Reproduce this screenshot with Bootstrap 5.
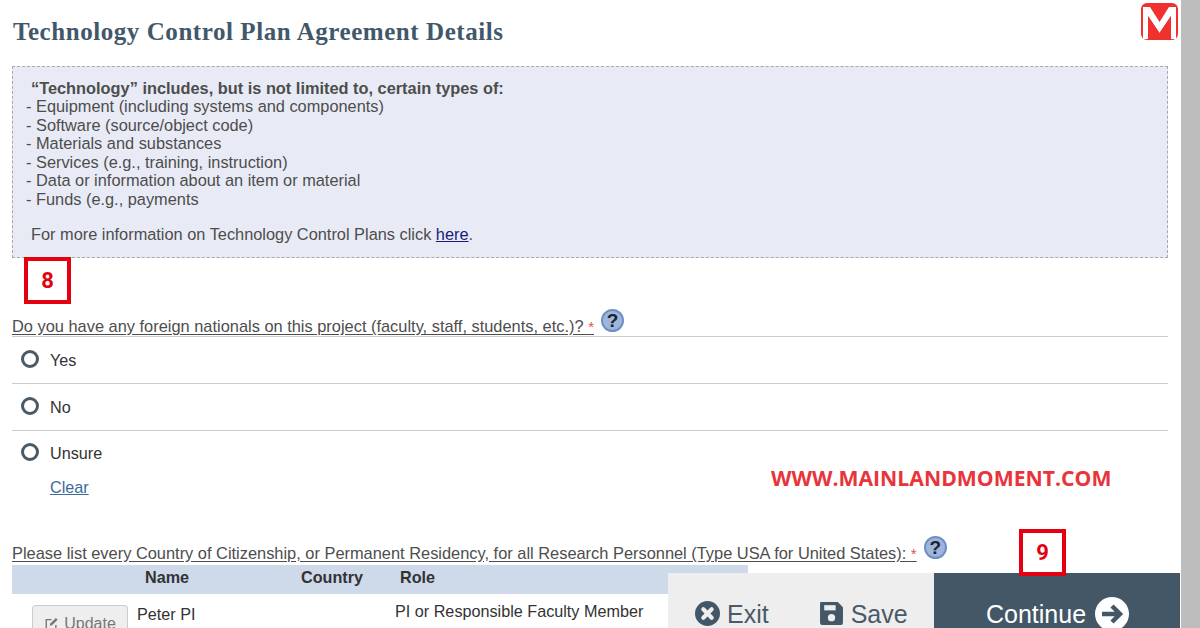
<!DOCTYPE html>
<html lang="en">

<head>
    <meta charset="UTF-8">
    <title>Technology Control Plan Agreement Details</title>
    <link href="https://cdn.jsdelivr.net/npm/bootstrap@5.3.3/dist/css/bootstrap.min.css" rel="stylesheet">
    <style>
        html, body { height: 100%; overflow: hidden; }
        body { font-family: "Liberation Sans", Arial, sans-serif; font-size: 16.2px; color: #444; background: #fff; }
        .page-wrap { height: 628px; }
        .page-main { width: 1181px; height: 628px; overflow: hidden; padding: 0 13px 0 12px; }
        .fake-scroll { width: 19px; background: #bdbdbd; }
        .page-title { font-family: "Liberation Serif", "Times New Roman", serif; font-weight: 700; font-size: 25px; letter-spacing: .56px; color: #42586a; line-height: 30px; margin: 17px 0 19px 1px; }
        .logo-m { position: absolute; left: 1141px; top: 3px; width: 37px; height: 37px; }
        .info-box { height: 192px; background: #e8ebf6; border: 1px dashed #a9a9a9; padding: 12px 13px; line-height: 18.45px; font-size: 16.35px; color: #4d4d4d; }
        .info-box p { margin: 0; }
        .info-head { font-weight: 700; padding-left: 5px; }
        .info-more { padding-left: 5px; margin-top: 17px !important; }
        .info-box a { color: #1a1a7a; }
        .tag-box { position: absolute; width: 47px; height: 47px; border: 4px solid #e5000f; background: #fff; color: #e5000f; font-family: Roboto, "Liberation Sans", sans-serif; font-weight: 700; font-size: 22px; }
        .tag-8 { left: 24px; top: 257px; }
        .tag-9 { left: 1019px; top: 529px; }
        .quest { font-size: 16.4px; line-height: 18px; color: #4d4d4d; }
        .quest-text { text-decoration: underline; text-underline-offset: 2px; }
        .req { color: #d9534f; font-size: 15px; }
        .help-dot { width: 23px; height: 23px; border-radius: 50%; background: #9fb6dc; border: 2px solid #6f8fc4; color: #1c2230; font-weight: 700; font-size: 19px; line-height: 1; margin-left: 7px; position: relative; top: -6px; }
        .quest-one { margin-top: 57px; }
        .radio-list { border-top: 1px solid #ccc; margin-top: -2px; }
        .radio-row { height: 47px; padding: 0 0 0 9px; border-bottom: 1px solid #ccc; background: transparent; color: #333; font-size: 16.2px; }
        .radio-row.last-row { border-bottom: 0; height: auto; padding-top: 10px; }
        .radio-dot { width: 18px; height: 18px; border: 3px solid #4a5a66; border-radius: 50%; flex: none; margin-right: 11px; position: relative; top: -1px; }
        .clear-link { color: #3b6a99; margin: 13px 0 0 38px; display: inline-block; line-height: 18px; }
        .quest-two { margin-top: 42px; }
        .people-table { width: 736px; margin: 0; table-layout: fixed; border-collapse: collapse; }
        .people-table th { background: #ced9ea; height: 29px; padding: 0 0 3px; font-size: 16.2px; color: #333; border: 0; vertical-align: middle; }
        .people-table td { padding: 11px 0 0; font-size: 16.2px; color: #333; border: 0; vertical-align: top; line-height: 18px; }
        .col-btn { width: 125px; }
        .col-name { width: 164px; }
        .col-country { width: 94px; }
        .people-table th.col-name { padding-left: 8px; }
        .people-table th.col-role { padding-left: 5px; }
        .people-table td.cell-role { padding-top: 8px; }
        /* button is cut by the window bottom, so it stops at the edge with no lower border */
        .btn-update { display: block; width: 96px; height: 23px; margin: 0 0 0 20px; padding: 11px 0 0; border: 1px solid #ccc; border-bottom: 0; border-radius: 4px 4px 0 0; background: #eee; color: #777; font-size: 16px; line-height: 12px; white-space: nowrap; }
        .btn-update svg { margin-right: 5px; vertical-align: -2px; }
        .action-bar { position: absolute; left: 668px; top: 573px; width: 512px; height: 55px; background: #eee; font-size: 25px; line-height: 30px; overflow: hidden; }
        .bar-left { width: 266px; height: 55px; padding: 26px 0 0 27px; color: #4a5a68; gap: 50px; }
        .bar-item svg { width: 25px; height: 25px; margin-right: 7px; }
        .bar-go { width: 246px; height: 55px; background: #435767; color: #fff; padding: 26px 0 0 52px; }
        .bar-go svg { width: 34px; height: 34px; margin-left: 9px; flex: none; }
        .site-url { position: absolute; left: 771px; top: 465px; font-family: "Open Sans", "Liberation Sans", sans-serif; font-weight: 700; font-size: 21.200px; line-height: 26px; color: #e8343a; white-space: nowrap; }
    </style>
</head>

<body>
    <div class="page-wrap d-flex position-relative">
        <div class="page-main">
            <h1 class="page-title">Technology Control Plan Agreement Details</h1>

            <!-- Info box -->
            <div class="info-box">
                <p class="info-head">“Technology” includes, but is not limited to, certain types of:</p>
                <p>- Equipment (including systems and components)</p>
                <p>- Software (source/object code)</p>
                <p>- Materials and substances</p>
                <p>- Services (e.g., training, instruction)</p>
                <p>- Data or information about an item or material</p>
                <p>- Funds (e.g., payments</p>
                <p class="info-more">For more information on Technology Control Plans click <a href="#">here</a>.</p>
            </div>

            <!-- First question -->
            <div class="quest quest-one d-flex align-items-center">
                <span class="quest-text">Do you have any foreign nationals on this project (faculty, staff, students, etc.)? <span class="req">*</span></span>
                <span class="help-dot d-flex align-items-center justify-content-center">?</span>
            </div>
            <div class="radio-list list-group list-group-flush">
                <div class="radio-row list-group-item d-flex align-items-center"><span class="radio-dot"></span>Yes</div>
                <div class="radio-row list-group-item d-flex align-items-center"><span class="radio-dot"></span>No</div>
                <div class="radio-row last-row list-group-item d-flex align-items-center"><span class="radio-dot"></span>Unsure</div>
            </div>
            <a href="#" class="clear-link">Clear</a>

            <!-- Second question -->
            <div class="quest quest-two d-flex align-items-center">
                <span class="quest-text">Please list every Country of Citizenship, or Permanent Residency, for all Research Personnel (Type USA for United States): <span class="req">*</span></span>
                <span class="help-dot d-flex align-items-center justify-content-center">?</span>
            </div>
            <table class="table people-table">
                <thead>
                    <tr>
                        <th class="col-btn"></th>
                        <th class="col-name">Name</th>
                        <th class="col-country">Country</th>
                        <th class="col-role">Role</th>
                    </tr>
                </thead>
                <tbody>
                    <tr>
                        <td><button class="btn btn-update" type="button"><svg width="15" height="14" viewBox="0 0 16 16" fill="none" stroke="#777" stroke-width="1.6"><path d="M13 9v5H2V3h6"/><path d="M6 10l.6-2.600L13 1l2 2-6.400 6.400z" fill="#777" stroke="none"/></svg>Update</button></td>
                        <td>Peter PI</td>
                        <td></td>
                        <td class="cell-role">PI or Responsible Faculty Member</td>
                    </tr>
                </tbody>
            </table>
        </div>
        <div class="fake-scroll"></div>

        <!-- Logo -->
        <svg class="logo-m" viewBox="0 0 37 37">
            <rect width="37" height="37" rx="6" fill="#f1312e"/>
            <path d="M2 36V4h7l9.500 15L28 4h7v32h-5V13l-11.500 17L7 13v23z" fill="#fff"/>
            <path d="M7 13v23h23V13L18.500 30z" fill="#f1312e"/>
        </svg>

        <!-- Annotations -->
        <div class="tag-box tag-8 d-flex align-items-center justify-content-center">8</div>
        <div class="site-url">WWW.MAINLANDMOMENT.COM</div>
        <div class="action-bar d-flex">
            <div class="bar-left d-flex">
                <span class="bar-item d-flex align-items-center">
                    <svg viewBox="0 0 24 24"><circle cx="12" cy="12" r="12" fill="#435767"/><path d="M8 8l8 8M16 8l-8 8" stroke="#eee" stroke-width="4" stroke-linecap="round"/></svg>Exit
                </span>
                <span class="bar-item d-flex align-items-center">
                    <svg viewBox="0 0 24 24"><path d="M2 1h16l5 5v15a2 2 0 0 1-2 2H3a2 2 0 0 1-2-2V2a1 1 0 0 1 1-1z" fill="#435767"/><rect x="5" y="4" width="11" height="5" fill="#eee"/><circle cx="12" cy="16" r="3.500" fill="#eee"/></svg>Save
                </span>
            </div>
            <div class="bar-go d-flex align-items-center">
                Continue
                <svg viewBox="0 0 34 34"><circle cx="17" cy="17" r="17" fill="#fff"/><path d="M7 17h17M17 9l8 8-8 8" fill="none" stroke="#435767" stroke-width="4.500"/></svg>
            </div>
        </div>
        <div class="tag-box tag-9 d-flex align-items-center justify-content-center">9</div>
    </div>

    <script src="https://cdn.jsdelivr.net/npm/bootstrap@5.3.3/dist/js/bootstrap.bundle.min.js"></script>
</body>

</html>
